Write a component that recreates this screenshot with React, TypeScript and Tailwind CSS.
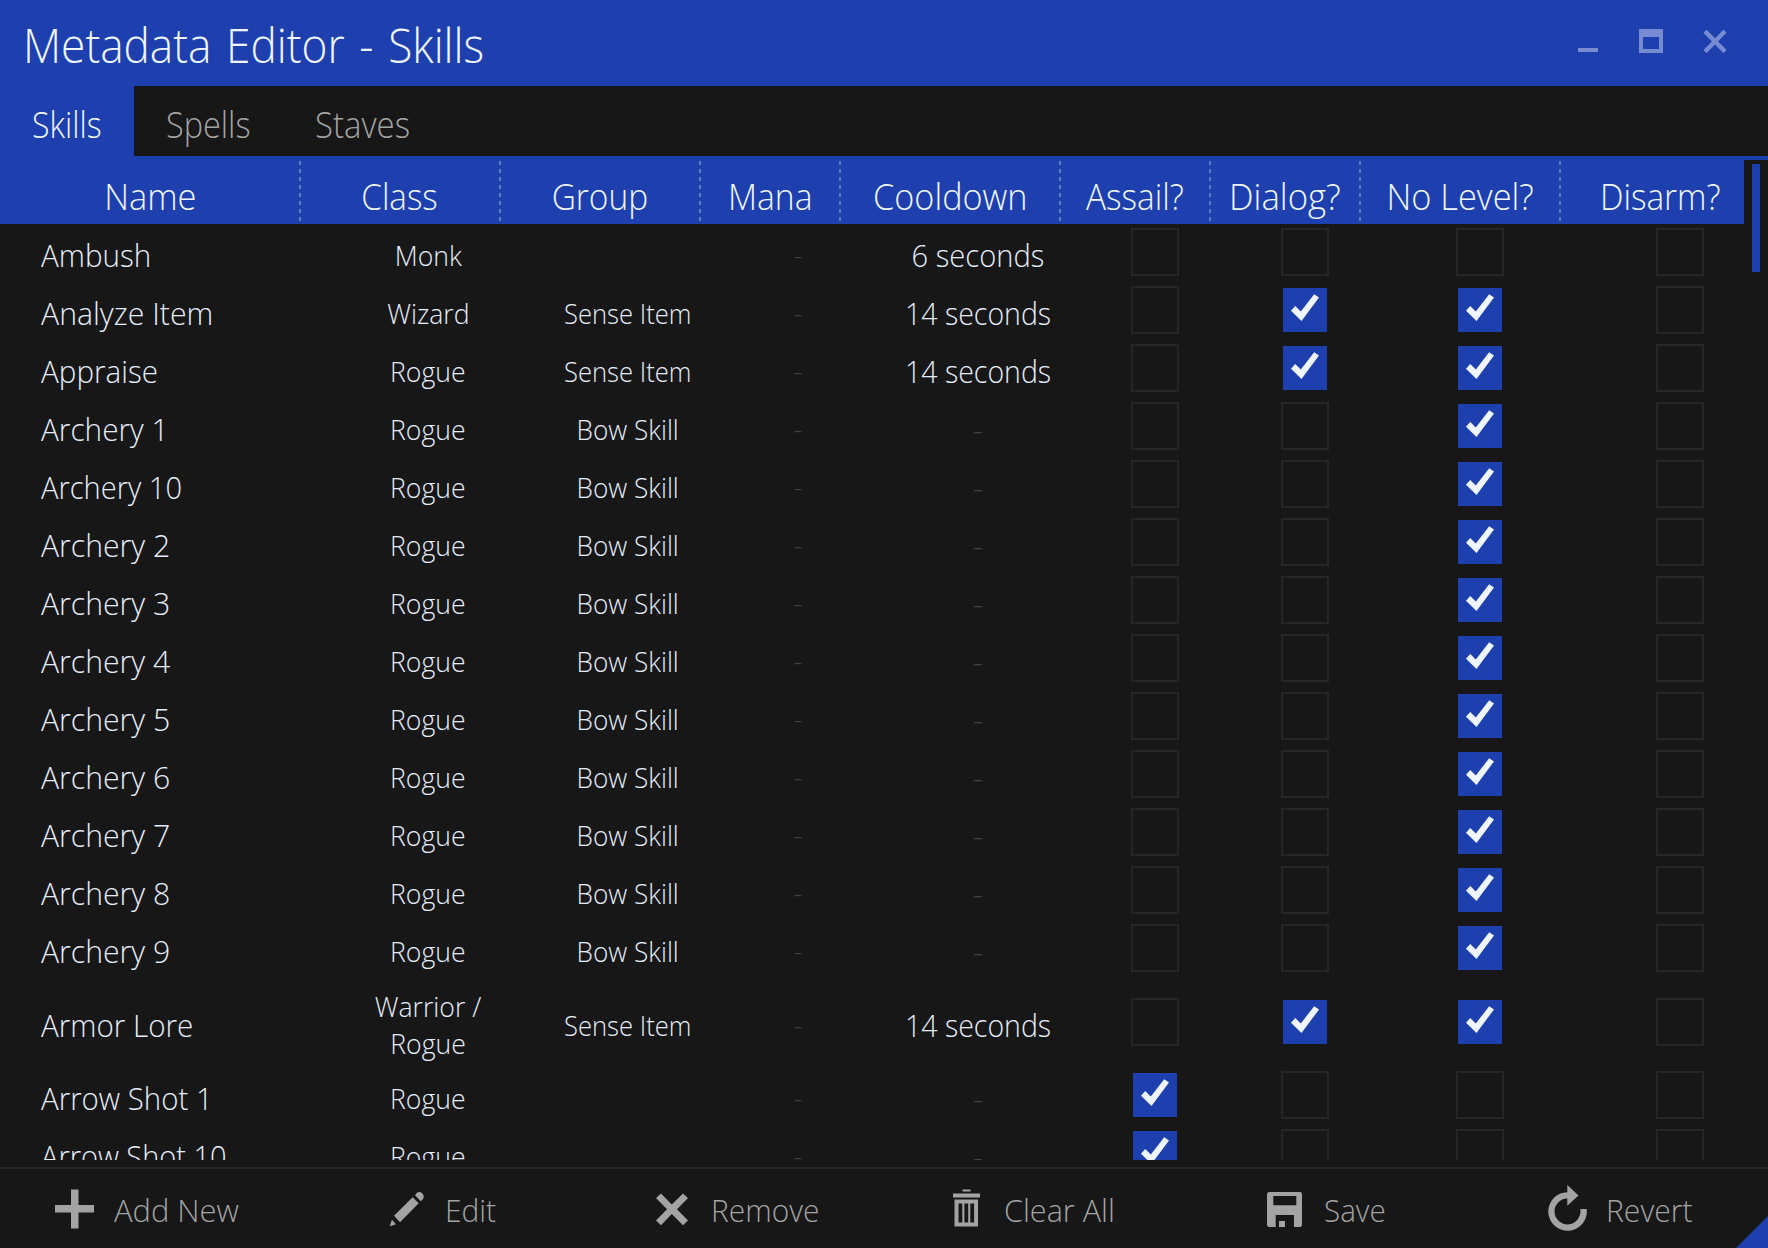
import type { ReactNode } from "react";

type Skill = {
  name: string;
  nameScale: string;
  cls: string[];
  group?: string;
  cooldown?: string;
  flags: [boolean, boolean, boolean, boolean];
};

const archery = (n: string): Skill => ({
  name: `Archery ${n}`,
  nameScale: n === "10" ? "scale-x-[0.908]" : n === "1" ? "scale-x-[0.93]" : "scale-x-[0.943]",
  cls: ["Rogue"],
  group: "Bow Skill",
  flags: [false, false, true, false],
});

const skills: Skill[] = [
  { name: "Ambush", nameScale: "scale-x-[0.925]", cls: ["Monk"], cooldown: "6 seconds", flags: [false, false, false, false] },
  { name: "Analyze Item", nameScale: "scale-x-[0.945]", cls: ["Wizard"], group: "Sense Item", cooldown: "14 seconds", flags: [false, true, true, false] },
  { name: "Appraise", nameScale: "scale-x-[0.925]", cls: ["Rogue"], group: "Sense Item", cooldown: "14 seconds", flags: [false, true, true, false] },
  ...["1", "10", "2", "3", "4", "5", "6", "7", "8", "9"].map(archery),
  { name: "Armor Lore", nameScale: "scale-x-[0.925]", cls: ["Warrior /", "Rogue"], group: "Sense Item", cooldown: "14 seconds", flags: [false, true, true, false] },
  { name: "Arrow Shot 1", nameScale: "scale-x-[0.92]", cls: ["Rogue"], flags: [true, false, false, false] },
  { name: "Arrow Shot 10", nameScale: "scale-x-[0.905]", cls: ["Rogue"], flags: [true, false, false, false] },
];

const columns = [
  { label: "Name", width: "w-[300px]", scale: "scale-x-[0.955]" },
  { label: "Class", width: "w-[200px]", scale: "scale-x-[0.92]" },
  { label: "Group", width: "w-[200px]", scale: "scale-x-[0.93]" },
  { label: "Mana", width: "w-[140px]", scale: "scale-x-[0.935]" },
  { label: "Cooldown", width: "w-[220px]", scale: "scale-x-[0.95]" },
  { label: "Assail?", width: "w-[150px]", scale: "scale-x-[0.925]" },
  { label: "Dialog?", width: "w-[150px]", scale: "scale-x-[0.965]" },
  { label: "No Level?", width: "w-[200px]", scale: "scale-x-[0.955]" },
  { label: "Disarm?", width: "w-[200px]", scale: "scale-x-[0.925]" },
];

function Check({ on }: { on: boolean }) {
  if (!on) return <span className="size-12 border-2 border-[#262626]" />;
  return (
    <span className="size-11 bg-[#1e40af]">
      <svg viewBox="0 0 44 44" className="size-11 fill-blue-50">
        <path d="M8 22.8 12.2 18l5.6 5.4L31.2 6.2l4.8 3.2L18.5 33Z" />
      </svg>
    </span>
  );
}

function Dash({ className }: { className: string }) {
  return <span className={`text-neutral-700 ${className}`}>-</span>;
}

function Row({ skill }: { skill: Skill }) {
  const tall = skill.cls.length > 1;
  const text = "flex shrink-0 items-center justify-center text-center";
  const flag = "flex shrink-0 items-center justify-center pl-10";
  return (
    <div className={`flex shrink-0 text-[#e6edf8] ${tall ? "h-[89px]" : "h-[58px]"}`}>
      <div className="flex w-[300px] shrink-0 items-center pt-1.5 pl-[41px] text-[32px]">
        <span className={`origin-left whitespace-nowrap ${skill.nameScale}`}>{skill.name}</span>
      </div>
      <div className={`${text} w-[200px] pt-[7px] pl-14 text-[28px] leading-[37px]`}>
        <span className="scale-x-[0.95]">
          {skill.cls.map((line) => (
            <span key={line} className="block">{line}</span>
          ))}
        </span>
      </div>
      <div className={`${text} w-[200px] pl-14 text-[28px] ${tall ? "pt-[7px]" : "pt-[5px]"}`}>
        <span className={`whitespace-nowrap ${skill.group === "Bow Skill" ? "scale-x-[0.935]" : "scale-x-[0.915]"}`}>{skill.group}</span>
      </div>
      <div className={`${text} w-[140px] pt-1 pl-14`}>
        <Dash className="text-[28px]" />
      </div>
      <div className={`${text} w-[220px] pt-1.5 pl-14 text-[32px]`}>
        {skill.cooldown ? (
          <span className={`whitespace-nowrap ${skill.cooldown === "6 seconds" ? "scale-x-[0.91]" : "scale-x-[0.89]"}`}>{skill.cooldown}</span>
        ) : (
          <Dash className="text-[32px]" />
        )}
      </div>
      <div className={`${flag} w-[150px]`}><Check on={skill.flags[0]} /></div>
      <div className={`${flag} w-[150px]`}><Check on={skill.flags[1]} /></div>
      <div className={`${flag} w-[200px]`}><Check on={skill.flags[2]} /></div>
      <div className={`${flag} w-[200px]`}><Check on={skill.flags[3]} /></div>
    </div>
  );
}

function Action({ pad, gap, scale, icon, label }: { pad: string; gap: string; scale: string; icon: ReactNode; label: string }) {
  return (
    <button className={`flex items-center text-left ${pad}`}>
      {icon}
      <span className={`origin-left pt-[3px] text-[32px] whitespace-nowrap ${gap} ${scale}`}>{label}</span>
    </button>
  );
}

const icon = "h-12 shrink-0 fill-[#a3a3a3]";

export default function App() {
  return (
    <div className="flex h-[1248px] w-[1768px] flex-col overflow-hidden bg-[#171717] font-['Open_Sans',sans-serif] font-light">
      <header className="flex h-[86px] shrink-0 items-center justify-between bg-[#1e40af] pr-[41px] pl-[23px]">
        <h1 className="origin-left scale-x-[0.92] pt-[3px] text-[48px] leading-none [word-spacing:3.5px] whitespace-nowrap text-blue-50">
          Metadata Editor - Skills
        </h1>
        <div className="flex pb-1 text-[#768bd2]">
          <svg viewBox="0 0 24 24" className="size-6 fill-current"><path d="M2 19h20v4H2z" /></svg>
          <svg viewBox="0 0 24 24" className="ml-[39px] size-6 fill-current"><path fillRule="evenodd" d="M0 0h24v24H0zM4 8v12h16V8z" /></svg>
          <svg viewBox="0 0 24 24" className="ml-10 size-6 stroke-current" strokeWidth="4.4"><path d="M2 2.2 22 22.6M22 2.2 2 22.6" /></svg>
        </div>
      </header>

      <nav className="flex h-[70px] shrink-0 text-[36px] leading-none text-[#a3a3a3]">
        <div className="flex w-[134px] items-center bg-[#1e40af] pt-[7px] pl-8 text-blue-50">
          <span className="origin-left scale-x-[0.89]">Skills</span>
        </div>
        <div className="flex w-[148px] items-center pt-[7px] pl-8">
          <span className="origin-left scale-x-[0.9]">Spells</span>
        </div>
        <div className="flex items-center pt-[7px] pl-[33px]">
          <span className="origin-left scale-x-[0.915]">Staves</span>
        </div>
      </nav>

      <main className="flex h-[1004px] shrink-0 border-t-4 border-[#1e40af]">
        <div className="flex w-[1744px] flex-col overflow-hidden">
          <div className="flex h-16 shrink-0 bg-[#1e40af] text-[36px] leading-none text-blue-50">
            {columns.map((c, i) => (
              <div key={c.label} className={`flex shrink-0 ${c.width}`}>
                <div className="flex flex-1 items-center justify-center pt-2.5 pl-px">
                  <span className={`whitespace-nowrap ${c.scale}`}>{c.label}</span>
                </div>
                {i < columns.length - 1 && (
                  <div className="mt-px -mr-px h-[60px] w-0.5 bg-[repeating-linear-gradient(to_bottom,#5f77c5_0_4px,transparent_4px_8px)]" />
                )}
              </div>
            ))}
          </div>
          <div className="-mt-px flex flex-1 flex-col overflow-hidden">
            {skills.map((s) => (
              <Row key={s.name} skill={s} />
            ))}
          </div>
        </div>
        <div className="w-6 pt-1 pl-2">
          <div className="h-[108px] w-2 bg-[#1e40af]" />
        </div>
      </main>

      <footer className="relative mt-[7px] grid h-[81px] shrink-0 grid-cols-6 border-t-2 border-[#262626] text-[#a3a3a3]">
        <Action pad="pl-[55px]" gap="ml-[20px]" scale="scale-x-[0.965]" label="Add New"
          icon={<svg viewBox="0 0 39 48" className={`${icon} w-[39px]`}><path d="M16 4.500h7.500V20H39v7.500H23.500v16H16v-16H0V20h16z" /></svg>} />
        <Action pad="pl-[94px]" gap="ml-[20px]" scale="scale-x-[0.935]" label="Edit"
          icon={
            <svg viewBox="0 0 36 48" className={`${icon} w-9`}>
              <path d="M.7 41.200 3 34.800l4 4.400zM5 30.800 23.700 12.200l6 6L11 37.200zM26 10.200l1.500-2a4.400 4.400 0 0 1 6.300 6l-2 2z" />
            </svg>
          } />
        <Action pad="pl-[67px]" gap="ml-[23px]" scale="scale-x-[0.935]" label="Remove"
          icon={<svg viewBox="0 0 32 48" className={`${icon} w-8`}><path d="M5 8.500 15.800 19.500 27 8.500 32 13 21 24.200 32 35.500 27 40.200 15.800 29 5 40.200 0 35.500 11 24.200 0 13z" /></svg>} />
        <Action pad="pl-[69px]" gap="ml-[24px]" scale="scale-x-[0.955]" label="Clear All"
          icon={
            <svg viewBox="0 0 27 48" className={`${icon} w-[27px]`}>
              <path fillRule="evenodd" d="M9.500 4.500h8v2h-8zM0 8.500h27v4H0zM1.500 14.500h23.500v27H1.500zM5.500 18.500v19h3.800v-19zM11.400 18.500v19h3.800v-19zM17.300 18.500v19h3.800v-19z" />
            </svg>
          } />
        <Action pad="pl-[88px]" gap="ml-[22px]" scale="scale-x-[0.925]" label="Save"
          icon={
            <svg viewBox="0 0 35 48" className={`${icon} w-[35px]`}>
              <path fillRule="evenodd" d="M1.500 7h32L35 8.500v32L33.500 42H27V30H8.700v12H1.500L0 40.500v-32zM6.300 11v9.300h23V11zM12 36h6v6h-6z" />
            </svg>
          } />
        <Action pad="pl-[75px]" gap="ml-[19px]" scale="scale-x-[0.94]" label="Revert"
          icon={
            <svg viewBox="0 0 39 48" className={`${icon} w-[39px]`}>
              <path d="M19.300 7.200A19.300 19.300 0 1 0 38.700 24H32.300A13 13 0 1 1 19.300 13.400V20.800L30.500 10.500 19.300 0z" />
            </svg>
          } />
        <div className="absolute right-0 bottom-0 size-8 bg-[#1e40af] [clip-path:polygon(100%_0,100%_100%,0_100%)]" />
      </footer>
    </div>
  );
}
